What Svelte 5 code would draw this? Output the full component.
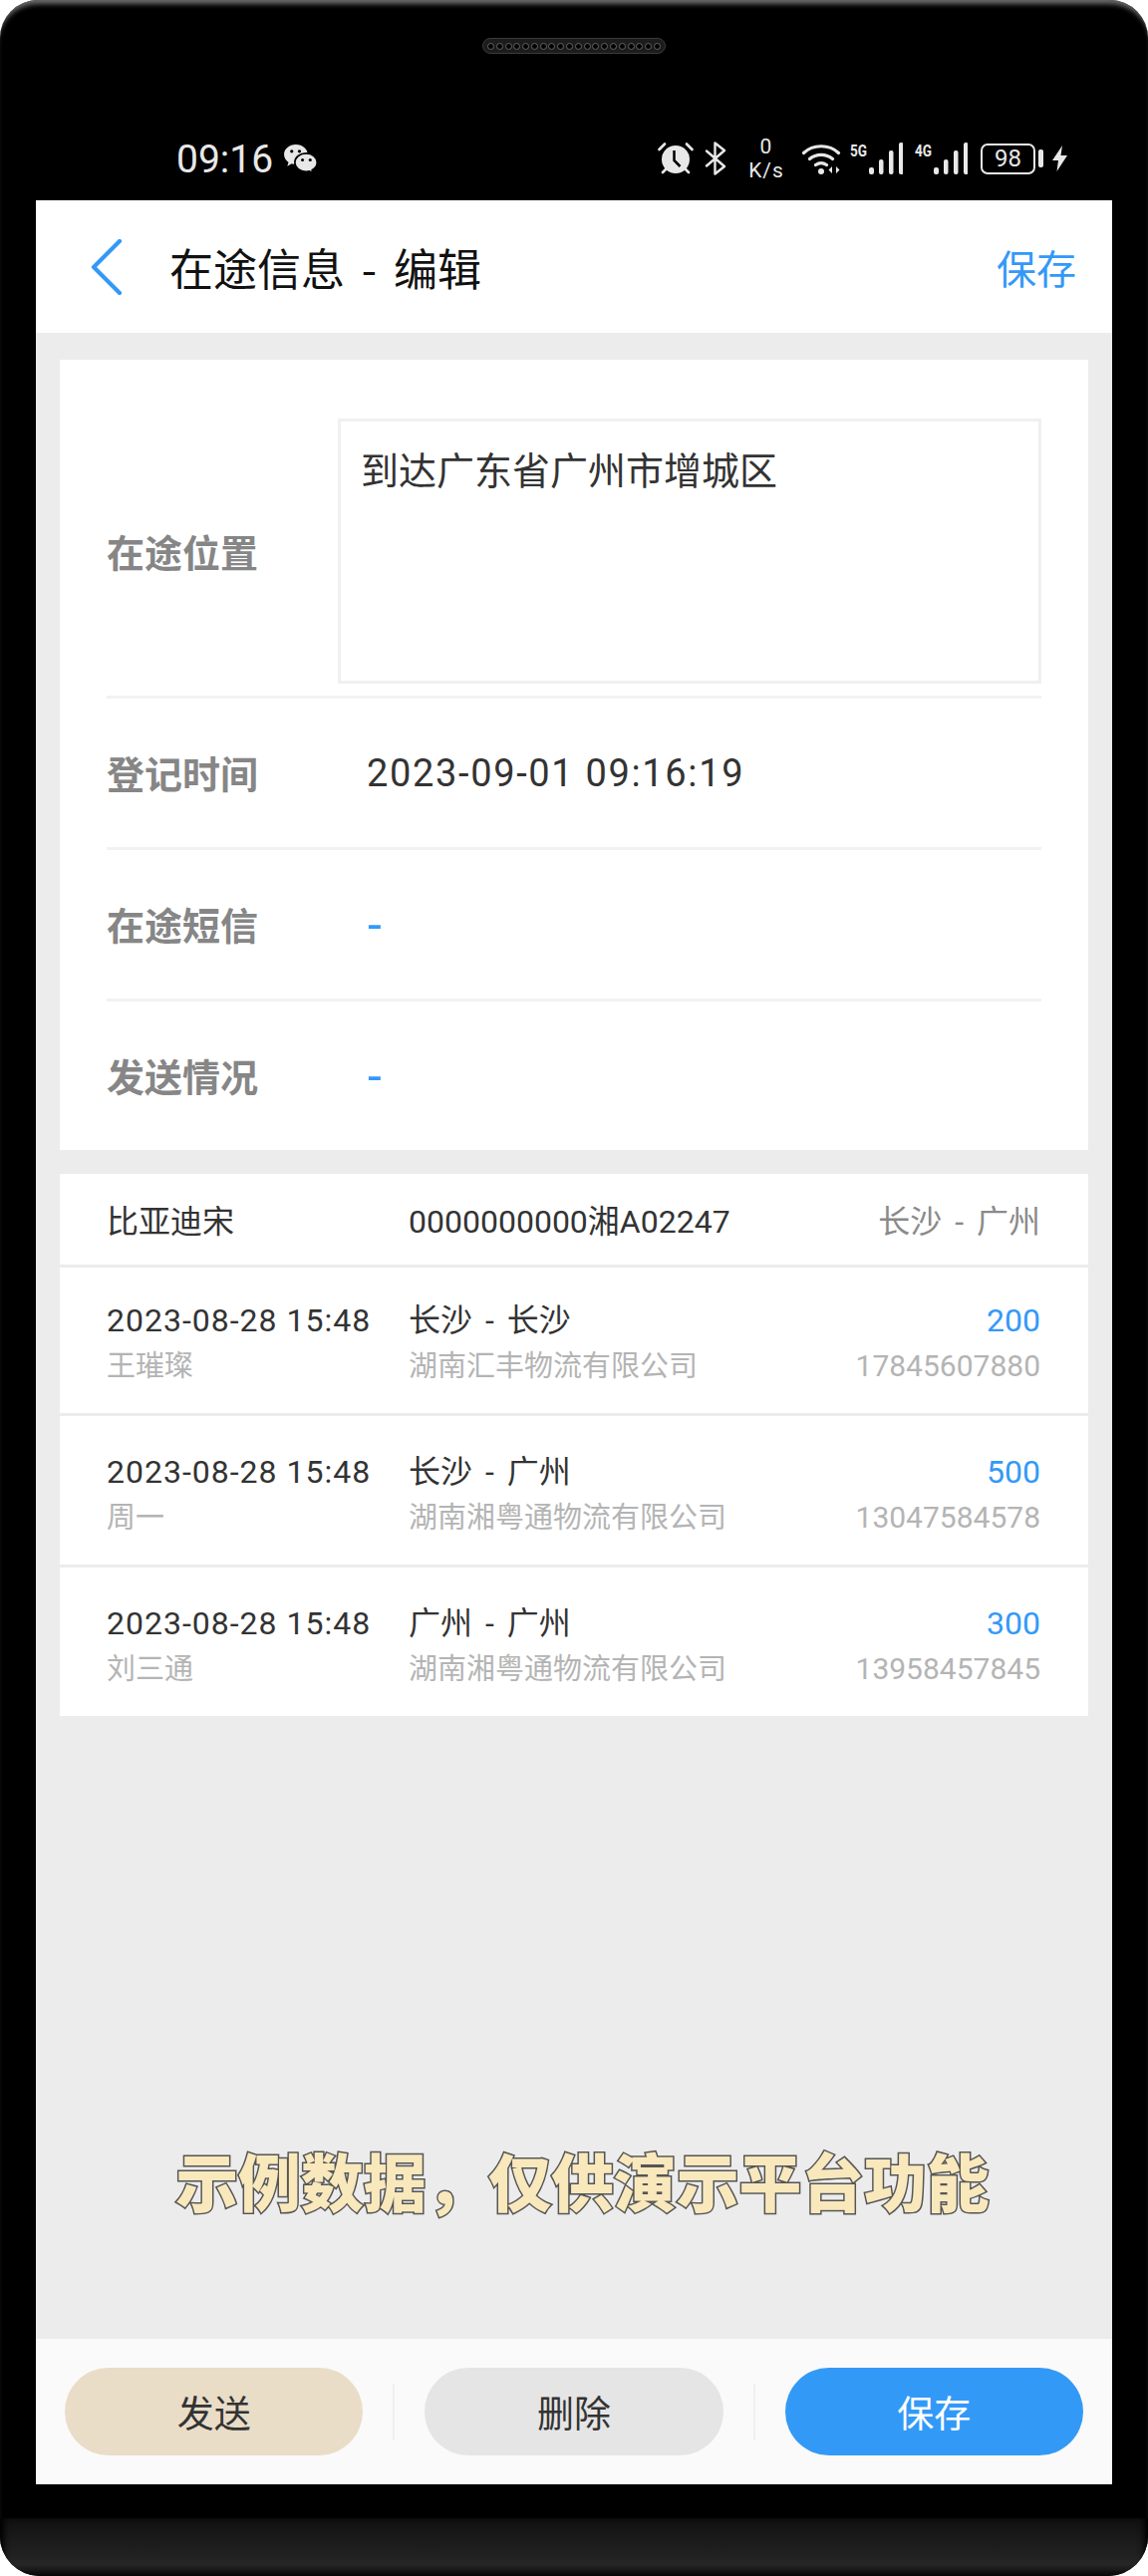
<script>
  const holes = Array.from({ length: 20 });
  const bars = [7, 15, 24, 32];
  const sends = [
    { time: '2023-08-28 15:48', name: '王璀璨', route: '长沙 - 长沙', company: '湖南汇丰物流有限公司', amount: '200', phone: '17845607880' },
    { time: '2023-08-28 15:48', name: '周一', route: '长沙 - 广州', company: '湖南湘粤通物流有限公司', amount: '500', phone: '13047584578' },
    { time: '2023-08-28 15:48', name: '刘三通', route: '广州 - 广州', company: '湖南湘粤通物流有限公司', amount: '300', phone: '13958457845' }
  ];
</script>

{#snippet signal(label)}
  <span class="net">{label}</span>
  <svg class="bars" width="34" height="32" viewBox="0 0 34 32" aria-hidden="true">
    {#each bars as h, i}
      <rect x={i * 10} y={32 - h} width={i ? 4.5 : 5} height={h} rx="2" fill="#e8e8e8" />
    {/each}
  </svg>
{/snippet}

<div class="phone">
  <div class="speaker">
    {#each holes as _}<span class="hole"></span>{/each}
  </div>

  <div class="status">
    <div class="status-left">
      <span class="clock">09:16</span>
      <svg class="wechat" width="35" height="31" viewBox="0 0 34 30" aria-hidden="true">
        <path d="M12.500 1C6 1 1 5.300 1 10.700c0 3.200 1.800 5.900 4.400 7.700L4.200 22l4.200-2.300c1.300.4 2.700.6 4.100.6C19 20.300 24 16 24 10.700S19 1 12.500 1z" fill="#e8e8e8" />
        <path d="M22.500 9.500c-6 0-11 3.900-11 9s5 9 11 9c1.200 0 2.300-.2 3.400-.5l3.200 2.200-.8-3.200c3-1.700 5-4.400 5-7.500 0-5.100-4.800-9-10.800-9z" fill="#e8e8e8" stroke="#000" stroke-width="1.600" />
        <circle cx="8.500" cy="7.500" r="1.600" fill="#000" /><circle cx="16" cy="7.500" r="1.600" fill="#000" />
        <circle cx="19" cy="16" r="1.500" fill="#000" /><circle cx="26.500" cy="16" r="1.500" fill="#000" />
      </svg>
    </div>
    <div class="status-right">
      <svg class="alarm" width="36" height="32" viewBox="0 0 36 32" aria-hidden="true">
        <circle cx="18" cy="17" r="14" fill="#e8e8e8" />
        <path d="M16.500 8v10l6 6" fill="none" stroke="#000" stroke-width="2.500" />
        <path d="M1.500 7 7 1.500M34.500 7 29 1.500M5 30l3-3M31 30l-3-3" stroke="#e8e8e8" stroke-width="2.600" stroke-linecap="round" />
      </svg>
      <svg class="bt" width="22" height="34" viewBox="0 0 22 34" aria-hidden="true">
        <path d="M2 9.500 20 25 10.500 32.500V1.500L20 9 2 24.500" fill="none" stroke="#e8e8e8" stroke-width="2.400" stroke-linejoin="round" stroke-linecap="round" />
      </svg>
      <div class="speed"><span>0</span><span>K/s</span></div>
      <svg class="wifi" width="40" height="32" viewBox="0 0 40 32" aria-hidden="true">
        <path d="M1.500 10.500C11 1.500 27 1.500 36.500 10.500M7.500 16.500c6.500-5.500 16.500-5.500 23 0M13.500 22.500c3.500-2.500 7.500-2.500 11 0" fill="none" stroke="#e8e8e8" stroke-width="3.200" stroke-linecap="round" />
        <circle cx="19" cy="29" r="3" fill="#e8e8e8" />
        <path d="M30 24v7l-3.500-3.500zM34 24v7l3.500-3.500z" fill="#e8e8e8" />
      </svg>
      <div class="signals">
        {@render signal('5G')}
        {@render signal('4G')}
      </div>
      <div class="battery"><span>98</span></div>
      <span class="nub"></span>
      <svg class="bolt" width="15" height="26" viewBox="0 0 15 26" aria-hidden="true">
        <path d="M10 0 0 15h6L4.500 26 15 10H8.500z" fill="#e8e8e8" />
      </svg>
    </div>
  </div>

  <main class="screen">
    <header class="topbar">
      <svg class="back" width="32" height="56" viewBox="0 0 32 56" aria-hidden="true">
        <path d="M29 2 3 28l26 26" fill="none" stroke="#3399f7" stroke-width="4.200" stroke-linecap="round" stroke-linejoin="round" />
      </svg>
      <h1>在途信息 - 编辑</h1>
      <span class="top-save">保存</span>
    </header>

    <div class="content">
      <section class="form">
        <div class="row first">
          <span class="label">在途位置</span>
          <div class="area">到达广东省广州市增城区</div>
        </div>
        <div class="row"><span class="label">登记时间</span><span class="value">2023-09-01 09:16:19</span></div>
        <div class="row"><span class="label">在途短信</span><span class="value dash">-</span></div>
        <div class="row"><span class="label">发送情况</span><span class="value dash">-</span></div>
      </section>

      <section class="list">
        <div class="line head">
          <span class="c1">比亚迪宋</span>
          <span class="c2">0000000000湘A02247</span>
          <span class="c3 muted">长沙 - 广州</span>
        </div>
        {#each sends as s}
          <div class="line item">
            <div class="c1"><div class="main">{s.time}</div><div class="sub">{s.name}</div></div>
            <div class="c2"><div class="main">{s.route}</div><div class="sub">{s.company}</div></div>
            <div class="c3"><div class="main amount">{s.amount}</div><div class="sub">{s.phone}</div></div>
          </div>
        {/each}
      </section>

      <div class="watermark">示例数据，仅供演示平台功能</div>
    </div>

    <footer class="actions">
      <button class="send">发送</button>
      <span class="sep"></span>
      <button class="del">删除</button>
      <span class="sep"></span>
      <button class="save">保存</button>
    </footer>
  </main>

  <div class="chin"></div>
</div>

<style>
  :global(body) { margin: 0; background: #fff; }
  * { box-sizing: border-box; }
  .phone {
    width: 1152px; height: 2585px; background: #000;
    border-radius: 38px 38px 40px 40px; overflow: hidden;
    display: flex; flex-direction: column; position: relative;
    font-family: Roboto, "Noto Sans CJK SC", sans-serif;
    box-shadow: inset 0 7px 5px -3px #6a6a6a;
  }
  .speaker {
    width: 184px; height: 16px; margin: 38px auto 0; padding: 0 4px;
    border-radius: 8px; background: #1c1c1c; border: 1px solid #3a3a3a;
    display: flex; align-items: center; justify-content: space-between;
  }
  .hole { width: 7px; height: 7px; border-radius: 50%; background: #000; border: 1px solid #666; }
  .status {
    height: 42px; margin-top: 84px; margin-bottom: 21px;
    padding: 0 81px 0 177px; display: flex; justify-content: space-between; align-items: center;
    color: #e8e8e8;
  }
  .status-left { display: flex; align-items: center; gap: 10px; }
  .clock { font-size: 39px; line-height: 42px; padding-top: 2px; }
  .wechat { margin-top: 1px; }
  .status-right { display: flex; align-items: center; }
  .status-right > svg, .signals svg { flex: none; }
  .bt { margin-left: 11px; }
  .speed {
    margin-left: 21px; display: flex; flex-direction: column; align-items: center;
    font-size: 21px; line-height: 24.500px; letter-spacing: 1px; width: 38px; height: 42px; justify-content: center;
  }
  .wifi { margin-left: 17px; }
  .signals { display: flex; align-items: flex-start; margin-left: 8px; }
  .net {
    font-size: 16px; line-height: 15px; font-weight: 700; width: 19px; margin-top: 1px;
    transform: scaleX(0.85); transform-origin: left center; white-space: nowrap;
  }
  .bars { margin-right: 12px; }
  .battery {
    width: 55px; height: 31px; margin-left: 1px; border: 2.500px solid #e8e8e8; border-radius: 7px;
    display: flex; align-items: center; justify-content: center; font-size: 24px; line-height: 1;
  }
  .nub { width: 5px; height: 18px; margin-left: 3px; background: #e8e8e8; border-radius: 2px; }
  .bolt { margin-left: 9px; }

  .screen {
    margin: 0 36px; height: 2292px; flex: none; background: #ececec;
    display: flex; flex-direction: column;
  }
  .topbar {
    height: 133px; flex: none; background: #fff; display: flex; align-items: center;
    padding: 0 36px 0 55px; font-family: "Noto Sans CJK SC", sans-serif;
  }
  .back { margin-right: 47px; }
  h1 { margin: 0; font-size: 44px; font-weight: 400; color: #111; flex: 1; line-height: 60px; word-spacing: 7px; }
  .top-save { font-size: 40px; color: #3399f7; line-height: 56px; }

  .content { flex: 1; padding: 27px 24px 0; position: relative; }
  .form { background: #fff; height: 793px; padding: 59px 47px 0 47px; }
  .row {
    height: 152px; display: flex; align-items: center; border-top: 3px solid #f2f2f2; padding-bottom: 2px;
  }
  .row.first { height: 278px; border-top: 0; padding-bottom: 12px; }
  .label {
    width: 232px; flex: none; font-size: 38px; font-weight: 700; color: #868686;
    font-family: "Noto Sans CJK SC", sans-serif; line-height: 50px;
  }
  .area {
    flex: 1; height: 266px; border: 3px solid #f0f0f0;
    padding: 21px 20px; font-size: 38px; line-height: 52px; color: #333;
    font-family: "Noto Sans CJK SC", sans-serif;
  }
  .value { margin-left: 29px; padding-top: 3px; font-size: 38px; color: #333; letter-spacing: 1.650px; line-height: 50px; }
  .dash { color: #3399f7; font-size: 50px; margin-left: 30px; }

  .list { margin-top: 24px; display: flex; flex-direction: column; gap: 3px; }
  .line { background: #fff; display: flex; padding: 0 48px 0 47px; align-items: center; }
  .line.head { height: 91px; font-size: 32px; color: #333; padding-bottom: 2px; }
  .line.item { height: 146px; padding-top: 6px; }
  .line.item:nth-child(3) { height: 149px; padding-top: 9px; }
  .line.item:nth-child(4) { height: 149px; padding-top: 9px; }
  .c1 { width: 303px; flex: none; }
  .c2 { flex: 1; }
  .c3 { text-align: right; }
  .c3.muted { word-spacing: 5px; }
  .muted { color: #8a8a8a; }
  .main { font-size: 32px; line-height: 46px; color: #333; }
  .c1 .main { letter-spacing: 1px; }
  .c2 .main { word-spacing: 5px; }
  .sub { font-size: 29px; line-height: 46px; color: #b4b4b4; }
  .c3 .sub { font-size: 30px; }
  .amount { color: #3399f7; }

  .watermark {
    position: absolute; left: 0; right: 0; bottom: 128px; padding-left: 17px;
    text-align: center; font-size: 62.800px; line-height: 64px; font-weight: 900;
    font-family: "Noto Sans CJK SC", sans-serif; color: #f8e8bc;
    -webkit-text-stroke: 3px #555; paint-order: stroke fill;
  }

  .actions {
    height: 146px; flex: none; background: #fafafa; display: flex; align-items: center;
    padding: 0 29px;
  }
  button {
    width: 300px; height: 88px; border: 0; border-radius: 44px / 44px;
    font-size: 37px; color: #333; font-family: "Noto Sans CJK SC", sans-serif; padding: 0;
  }
  .send { background: #e9ddc8; }
  .del { background: #e5e5e5; }
  .save { background: #3399f7; color: #fff; }
  .sep { width: 2px; height: 57px; background: #f0f0f0; margin: 0 30px; flex: none; }

  .chin {
    height: 58px; margin-top: 34px; flex: none;
    background: linear-gradient(#101010, #262626 80%, #0a0a0a 100%);
    box-shadow: inset 7px 0 6px -3px #000, inset -7px 0 6px -3px #000;
  }
</style>
